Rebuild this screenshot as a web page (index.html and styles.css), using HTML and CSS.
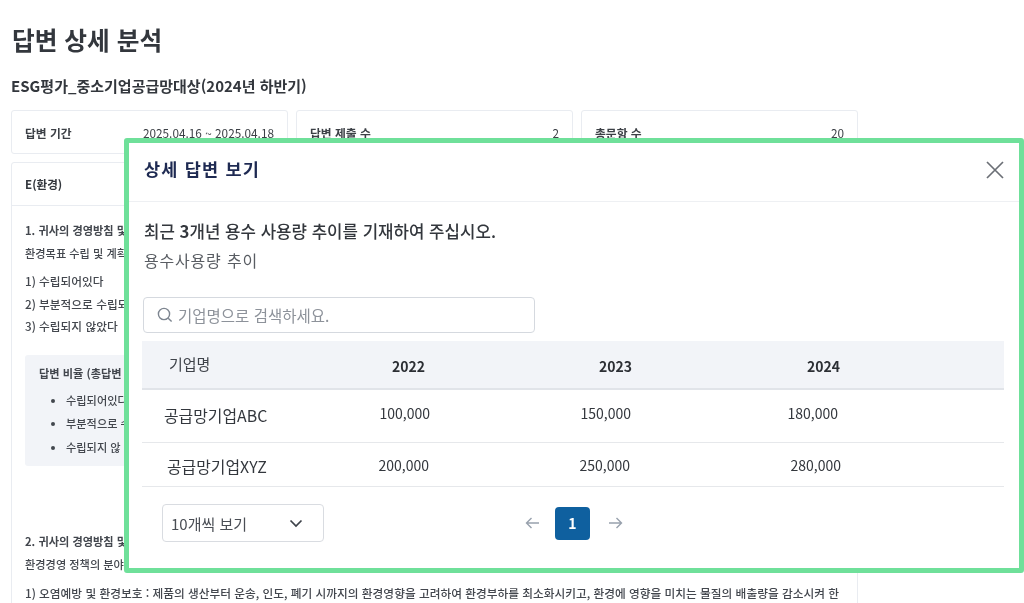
FILE: index.html
```html
<!DOCTYPE html>
<html lang="ko">
<head>
<meta charset="utf-8">
<title>답변 상세 분석</title>
<link rel="stylesheet" href="styles.css">
</head>
<body>
<main class="page">
  <h1 class="page-title">답변 상세 분석</h1>
  <h2 class="survey-name">ESG평가_중소기업공급망대상(2024년 하반기)</h2>
  <section class="stats">
    <div class="stat"><b>답변 기간</b><span>2025.04.16 ~ 2025.04.18</span></div>
    <div class="stat"><b>답변 제출 수</b><span>2</span></div>
    <div class="stat"><b>총문항 수</b><span>20</span></div>
  </section>
  <section class="panel">
    <div class="panel-head">E(환경)</div>
    <div class="panel-body">
      <p class="q">1. 귀사의 경영방침 및</p>
      <p class="q q-sub">환경목표 수립 및 계획</p>
      <ol class="choices">
        <li>1) 수립되어있다</li>
        <li>2) 부분적으로 수립되</li>
        <li>3) 수립되지 않았다</li>
      </ol>
      <div class="ratio">
        <p class="ratio-title">답변 비율 (총답변 수</p>
        <ul class="ratio-list">
          <li>수립되어있다</li>
          <li>부분적으로 수</li>
          <li>수립되지 않</li>
        </ul>
      </div>
      <p class="q q-second">2. 귀사의 경영방침 및</p>
      <p class="q q-sub">환경경영 정책의 분야</p>
      <p class="long">1) 오염예방 및 환경보호 : 제품의 생산부터 운송, 인도, 폐기 시까지의 환경영향을 고려하여 환경부하를 최소화시키고, 환경에 영향을 미치는 물질의 배출량을 감소시켜 한</p>
    </div>
  </section>
</main>

<div class="modal">
  <header class="modal-head">
    <h3>상세 답변 보기</h3>
    <svg class="close" width="20" height="20" viewBox="0 0 20 20" aria-label="닫기"><path d="M2 2 L18 18 M18 2 L2 18" fill="none" stroke="#6b6f76" stroke-width="1.7"/></svg>
  </header>
  <div class="modal-body">
    <p class="question">최근 <b>3</b>개년 용수 사용량 추이를 기재하여 주십시오.</p>
    <p class="question-sub">용수사용량 추이</p>
    <div class="search">
      <svg width="16" height="16" viewBox="0 0 16 16"><circle cx="7" cy="7" r="5.6" fill="none" stroke="#7d8590" stroke-width="1.4"/><path d="M11.2 11.2 L14.6 14.6" stroke="#7d8590" stroke-width="1.4" fill="none"/></svg>
      <span>기업명으로 검색하세요.</span>
    </div>
    <div class="table">
      <div class="row row-head">
        <span class="name name-head">기업명</span><b class="c1">2022</b><b class="c2">2023</b><b class="c3">2024</b>
      </div>
      <div class="row row-a">
        <span class="name">공급망기업ABC</span><span class="c1">100,000</span><span class="c2">150,000</span><span class="c3">180,000</span>
      </div>
      <div class="row row-b">
        <span class="name">공급망기업XYZ</span><span class="c1">200,000</span><span class="c2">250,000</span><span class="c3">280,000</span>
      </div>
    </div>
    <div class="foot">
      <div class="select">
        <span>10개씩 보기</span>
        <svg width="14" height="9" viewBox="0 0 14 9"><path d="M1.5 1.5 L7 7 L12.5 1.5" fill="none" stroke="#3d4249" stroke-width="1.7"/></svg>
      </div>
      <nav class="pager">
        <svg width="15" height="12" viewBox="0 0 15 12"><path d="M14 6 H1.5 M6.5 1 L1.5 6 L6.5 11" fill="none" stroke="#98a1ad" stroke-width="1.4"/></svg>
        <span class="page-btn">1</span>
        <svg width="15" height="12" viewBox="0 0 15 12"><path d="M1 6 H13.5 M8.5 1 L13.5 6 L8.5 11" fill="none" stroke="#98a1ad" stroke-width="1.4"/></svg>
      </nav>
    </div>
  </div>
</div>
</body>
</html>
```
FILE: styles.css
```css
* { box-sizing: border-box; }
html, body { margin: 0; height: 603px; overflow: hidden; background: #fff; }
body {
  font-family: "Noto Sans CJK KR", "Noto Sans", sans-serif;
  color: #33373d;
  position: relative;
  filter: blur(0.45px);
}
p, h1, h2, h3, ul, ol { margin: 0; padding: 0; }
ol, ul { list-style: none; }

.page { width: 858px; padding: 20px 0 0 11px; }
.page-title { font-size: 24.7px; line-height: 38px; font-weight: 700; color: #33373d; padding-left: 1px; }
.survey-name { font-size: 15px; line-height: 22px; font-weight: 700; color: #33373d; margin-top: 17px; }
.stats { display: grid; grid-template-columns: repeat(3, 277px); gap: 8px; margin-top: 13px; }
.stat {
  height: 44px; border: 1px solid #e9ecf1; border-radius: 3px;
  display: flex; justify-content: space-between; align-items: center;
  padding: 0 13px; font-size: 11.8px; color: #3c4046;
}
.stat b { font-weight: 700; }
.panel { margin-top: 8px; border: 1px solid #e9ecf1; border-radius: 3px 3px 0 0; height: 460px; }
.panel-head { height: 43px; line-height: 42px; padding-left: 13px; font-size: 11.6px; font-weight: 700; border-bottom: 1px solid #e9ecf1; }
.panel-body { padding: 13px 13px 0; font-size: 11.7px; color: #43474e; }
.q { font-weight: 700; line-height: 23px; font-size: 11.2px; white-space: nowrap; }
.q-sub { font-weight: 500; }
.choices { margin-top: 5px; }
.choices li { line-height: 22.5px; font-weight: 500; white-space: nowrap; }
.ratio { margin-top: 17px; width: 800px; height: 111px; background: #f2f4f8; border-radius: 3px; padding: 8px 14px; font-size: 11.2px; }
.ratio-title { font-weight: 700; line-height: 20px; white-space: nowrap; }
.ratio-list { margin-top: 6px; padding-left: 27px; list-style: disc; }
.ratio-list li { line-height: 23.5px; font-weight: 500; white-space: nowrap; }
.q-second { margin-top: 64px; }
.long { margin-top: 6px; line-height: 22px; white-space: nowrap; font-weight: 500; font-size: 11.7px; }

.modal {
  position: absolute; left: 124px; top: 138px; width: 900px; height: 435px;
  background: #fff; border: 5px solid #6fe09a; border-radius: 3px;
}
.modal-head {
  height: 59px; border-bottom: 1px solid #eef0f3;
  display: flex; align-items: center; justify-content: space-between;
  padding: 0 14px 4px 15px;
}
.modal-head h3 { font-size: 17.5px; font-weight: 700; color: #1e2a52; letter-spacing: 1.2px; padding-bottom: 4px; }
.close { display: block; }
.modal-body { padding: 17px 14px 0 13px; }
.question { font-size: 16.8px; line-height: 24px; font-weight: 500; color: #33373d; padding-left: 2px; white-space: nowrap; }
.question b { font-weight: 700; }
.question-sub { font-size: 16px; line-height: 24px; margin-top: 5px; color: #595d63; padding-left: 2px; letter-spacing: 0.8px; }
.search {
  width: 392px; height: 36px; margin: 25px 0 0 1px;
  border: 1px solid #d5d9df; border-radius: 4px;
  display: flex; align-items: center; gap: 5px; padding-left: 13px;
  font-size: 15.5px; color: #8d929a;
}
.search svg { flex: none; }
.table { margin-top: 8px; width: 862px; }
.row {
  display: grid; grid-template-columns: 207px 76px 207px 208px;
  align-items: center; border-bottom: 1px solid #e6e8eb; font-size: 14px; color: #33373d;
}
.row-head { height: 49px; background: #f2f4f8; border-bottom: 2px solid #e1e4e9; }
.row-a { height: 53px; }
.row-b { height: 44px; }
.row .c1, .row .c2, .row .c3 { text-align: right; }
.row-head b { font-weight: 700; font-size: 14px; color: #2c2f34; padding-top: 3px; }
.name { white-space: nowrap; font-size: 15.9px; }
.name-head { padding-left: 27px; padding-bottom: 3px; font-size: 15px; color: #3f434a; }
.row-a .name { padding: 0 0 2px 22px; }
.row-b .name { padding: 3px 0 0 25px; }
.row-a .c1, .row-a .c2, .row-a .c3 { padding-bottom: 6px; }
.row-a .c1 { margin-right: -5px; }
.row-a .c2 { margin-right: 1px; }
.row-a .c3 { margin-right: 2px; }
.row-b .c1 { margin-right: -4px; }
.row-b .c2 { margin-right: 2px; }
.row-b .c3 { margin-right: -1px; }

.foot { display: flex; align-items: center; margin-top: 17px; }
.select {
  width: 162px; height: 38px; margin-left: 20px;
  border: 1px solid #d9dce1; border-radius: 4px;
  display: flex; align-items: center; justify-content: space-between;
  padding: 0 20px 0 8px; font-size: 15px; color: #4a4e55;
}
.pager { display: flex; align-items: center; gap: 15px; margin-left: 201px; }
.page-btn {
  width: 35px; height: 33px; margin-right: 3px; background: #0f609f; border-radius: 4px;
  color: #fff; font-size: 14px; font-weight: 700;
  display: flex; align-items: center; justify-content: center;
}
```
